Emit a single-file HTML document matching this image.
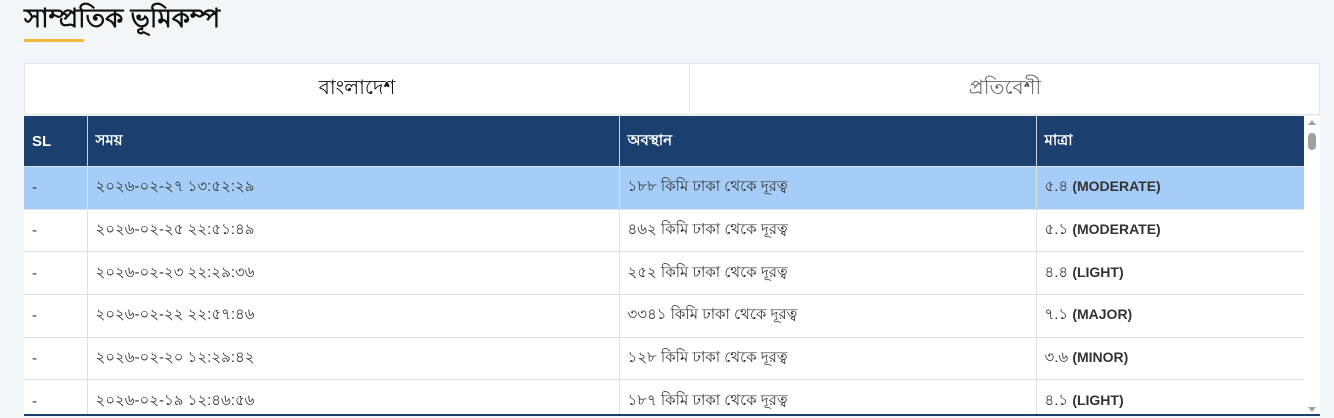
<!DOCTYPE html>
<html><head><meta charset="utf-8"><style>
body{margin:0;width:1334px;height:418px;background:#f3f6f9;font-family:"Liberation Sans","DejaVu Sans",sans-serif;overflow:hidden;position:relative}
h1{position:absolute;left:24px;top:0;margin:0;font-size:26px;line-height:36px;font-weight:bold;color:#111}
.bar{position:absolute;left:24px;top:39px;width:60px;height:3px;background:#f0b93a}
.tabs{position:absolute;left:24px;top:63px;width:1296px;height:52px;background:#fff;border:1px solid #e2e6ea;box-sizing:border-box;display:flex}
.tabs div{flex:none;display:flex;align-items:center;justify-content:center;font-size:20px}
.t1{width:664px;color:#111;border-right:1px solid #e2e6ea}
.t2{width:630px;color:#666}
.wrap{position:absolute;left:24px;top:116px;width:1296px;height:300px;background:#fff;overflow:hidden;border-bottom:2px solid #1b3f6e;box-sizing:border-box}
table{border-collapse:collapse;width:1280px;table-layout:fixed;font-size:15px}
th{background:#1b3f6e;color:#fff;text-align:left;height:50px;padding:0 0 0 8px;font-weight:bold;border-right:1px solid #c9d2dc;font-size:15px}
td{height:41.7px;padding:0 0 0 8px;border:1px solid #dde1e5;color:#333;border-left:none}
tr.sel td{background:#a6cdf7}
.sb{position:absolute;right:0;top:0;width:16px;height:300px;background:#fff}
.sb .th{position:absolute;left:4px;top:17px;width:8px;height:17px;border-radius:4px;background:#a0a0a0}
.up{position:absolute;left:4px;top:4px;width:0;height:0;border-left:4px solid transparent;border-right:4px solid transparent;border-bottom:5px solid #a0a0a0}
.dn{position:absolute;left:4px;bottom:4px;width:0;height:0;border-left:4px solid transparent;border-right:4px solid transparent;border-top:5px solid #a0a0a0}
b{color:#333;font-size:14px}
</style></head><body>
<h1>সাম্প্রতিক ভূমিকম্প</h1>
<div class="bar"></div>
<div class="tabs"><div class="t1">বাংলাদেশ</div><div class="t2">প্রতিবেশী</div></div>
<div class="wrap">
<table>
<colgroup><col style="width:63px"><col style="width:532px"><col style="width:417px"><col style="width:268px"></colgroup>
<tr><th>SL</th><th>সময়</th><th>অবস্থান</th><th>মাত্রা</th></tr>
<tr class="sel"><td>-</td><td>২০২৬-০২-২৭ ১৩:৫২:২৯</td><td>১৮৮ কিমি ঢাকা থেকে দূরত্ব</td><td>৫.৪ <b>(MODERATE)</b></td></tr>
<tr><td>-</td><td>২০২৬-০২-২৫ ২২:৫১:৪৯</td><td>৪৬২ কিমি ঢাকা থেকে দূরত্ব</td><td>৫.১ <b>(MODERATE)</b></td></tr>
<tr><td>-</td><td>২০২৬-০২-২৩ ২২:২৯:৩৬</td><td>২৫২ কিমি ঢাকা থেকে দূরত্ব</td><td>৪.৪ <b>(LIGHT)</b></td></tr>
<tr><td>-</td><td>২০২৬-০২-২২ ২২:৫৭:৪৬</td><td>৩৩৪১ কিমি ঢাকা থেকে দূরত্ব</td><td>৭.১ <b>(MAJOR)</b></td></tr>
<tr><td>-</td><td>২০২৬-০২-২০ ১২:২৯:৪২</td><td>১২৮ কিমি ঢাকা থেকে দূরত্ব</td><td>৩.৬ <b>(MINOR)</b></td></tr>
<tr><td>-</td><td>২০২৬-০২-১৯ ১২:৪৬:৫৬</td><td>১৮৭ কিমি ঢাকা থেকে দূরত্ব</td><td>৪.১ <b>(LIGHT)</b></td></tr>
</table>
<div class="sb"><div class="up"></div><div class="th"></div><div class="dn"></div></div>
</div>
</body></html>
